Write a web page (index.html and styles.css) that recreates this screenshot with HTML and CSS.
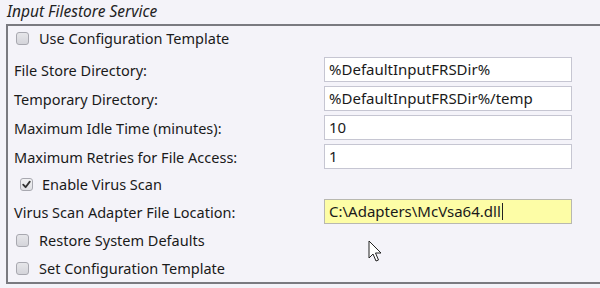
FILE: index.html
```html
<!DOCTYPE html>
<html>
<head>
<meta charset="utf-8">
<link rel="stylesheet" href="styles.css">
</head>
<body>
<div class="page">
  <div class="title">Input Filestore Service</div>
  <div class="group">
    <div class="row check-row first">
      <span class="cb"></span><span class="cb-label">Use Configuration Template</span>
    </div>
    <div class="row field-row">
      <span class="label">File Store Directory:</span>
      <span class="input">%DefaultInputFRSDir%</span>
    </div>
    <div class="row field-row">
      <span class="label">Temporary Directory:</span>
      <span class="input">%DefaultInputFRSDir%/temp</span>
    </div>
    <div class="row field-row">
      <span class="label">Maximum Idle Time (minutes):</span>
      <span class="input">10</span>
    </div>
    <div class="row field-row">
      <span class="label">Maximum Retries for File Access:</span>
      <span class="input">1</span>
    </div>
    <div class="row check-row indented">
      <span class="cb checked"><svg viewBox="0 0 13 13" width="13" height="13"><path d="M3.2 6.6 L5.6 9.2 L9.8 3.6" fill="none" stroke="#333" stroke-width="1.8" stroke-linecap="round" stroke-linejoin="round"/></svg></span><span class="cb-label">Enable Virus Scan</span>
    </div>
    <div class="row field-row">
      <span class="label">Virus Scan Adapter File Location:</span>
      <span class="input active">C:\Adapters\McVsa64.dll<span class="caret"></span></span>
    </div>
    <div class="row check-row">
      <span class="cb"></span><span class="cb-label">Restore System Defaults</span>
    </div>
    <div class="row check-row">
      <span class="cb"></span><span class="cb-label">Set Configuration Template</span>
    </div>
  </div>
  <svg class="pointer" width="16" height="24" viewBox="0 0 16 24"><path d="M1 1 L1 18 L5 14 L8 21 L10.5 20 L7.5 13 L13 13 Z" fill="#fff" stroke="#222" stroke-width="1" stroke-linejoin="round"/></svg>
</div>
</body>
</html>
```

FILE: styles.css
```css
html, body {
  margin: 0;
  padding: 0;
  background: #f4f3f9;
}
.page {
  position: relative;
  width: 600px;
  height: 288px;
  overflow: hidden;
  font-family: "Noto Sans", "Open Sans", sans-serif;
  font-size: 14.5px;
  color: #1a1a1a;
}
.title {
  font-style: italic;
  height: 24px;
  line-height: 22px;
  padding-left: 7px;
  font-size: 15.5px;
  color: #222;
}
.group {
  margin-left: 6px;
  width: 620px;
  border-top: 2px solid #7a7a80;
  border-left: 2px solid #7a7a80;
  border-bottom: 2px solid #7a7a80;
  display: flex;
  flex-direction: column;
  gap: 4px;
  padding: 0 0 2px 6px;
  box-sizing: border-box;
  height: 260px;
}
.row {
  display: flex;
  align-items: center;
}
.check-row {
  height: 24px;
}
.check-row.first {
  margin-bottom: 3px;
}
.check-row.indented {
  padding-left: 5px;
  height: 22px;
}
.field-row {
  height: 25px;
}
.label {
  width: 310px;
  flex: none;
}
.input {
  width: 248px;
  height: 25px;
  box-sizing: border-box;
  border: 1px solid #c6c6d2;
  background: #ffffff;
  padding: 0 4px;
  line-height: 23px;
  font-size: 15px;
  display: flex;
  align-items: center;
}
.input.active {
  background: #fdfda6;
  border-color: #b8b8b0;
}
.caret {
  display: inline-block;
  width: 1px;
  height: 17px;
  background: #222;
  margin-left: 1px;
}
.cb {
  width: 13px;
  height: 13px;
  box-sizing: border-box;
  border: 1px solid #a8a8b0;
  border-radius: 3px;
  background: linear-gradient(#e6e6ea, #d4d4da);
  margin-left: 2px;
  margin-right: 10px;
  display: inline-flex;
  flex: none;
}
.cb.checked {
  background: linear-gradient(#f2f2f4, #e0e0e4);
  margin-left: 1px;
  margin-right: 9px;
}
.cb svg {
  margin: -1px;
}
.pointer {
  position: absolute;
  left: 368px;
  top: 240px;
}
```
